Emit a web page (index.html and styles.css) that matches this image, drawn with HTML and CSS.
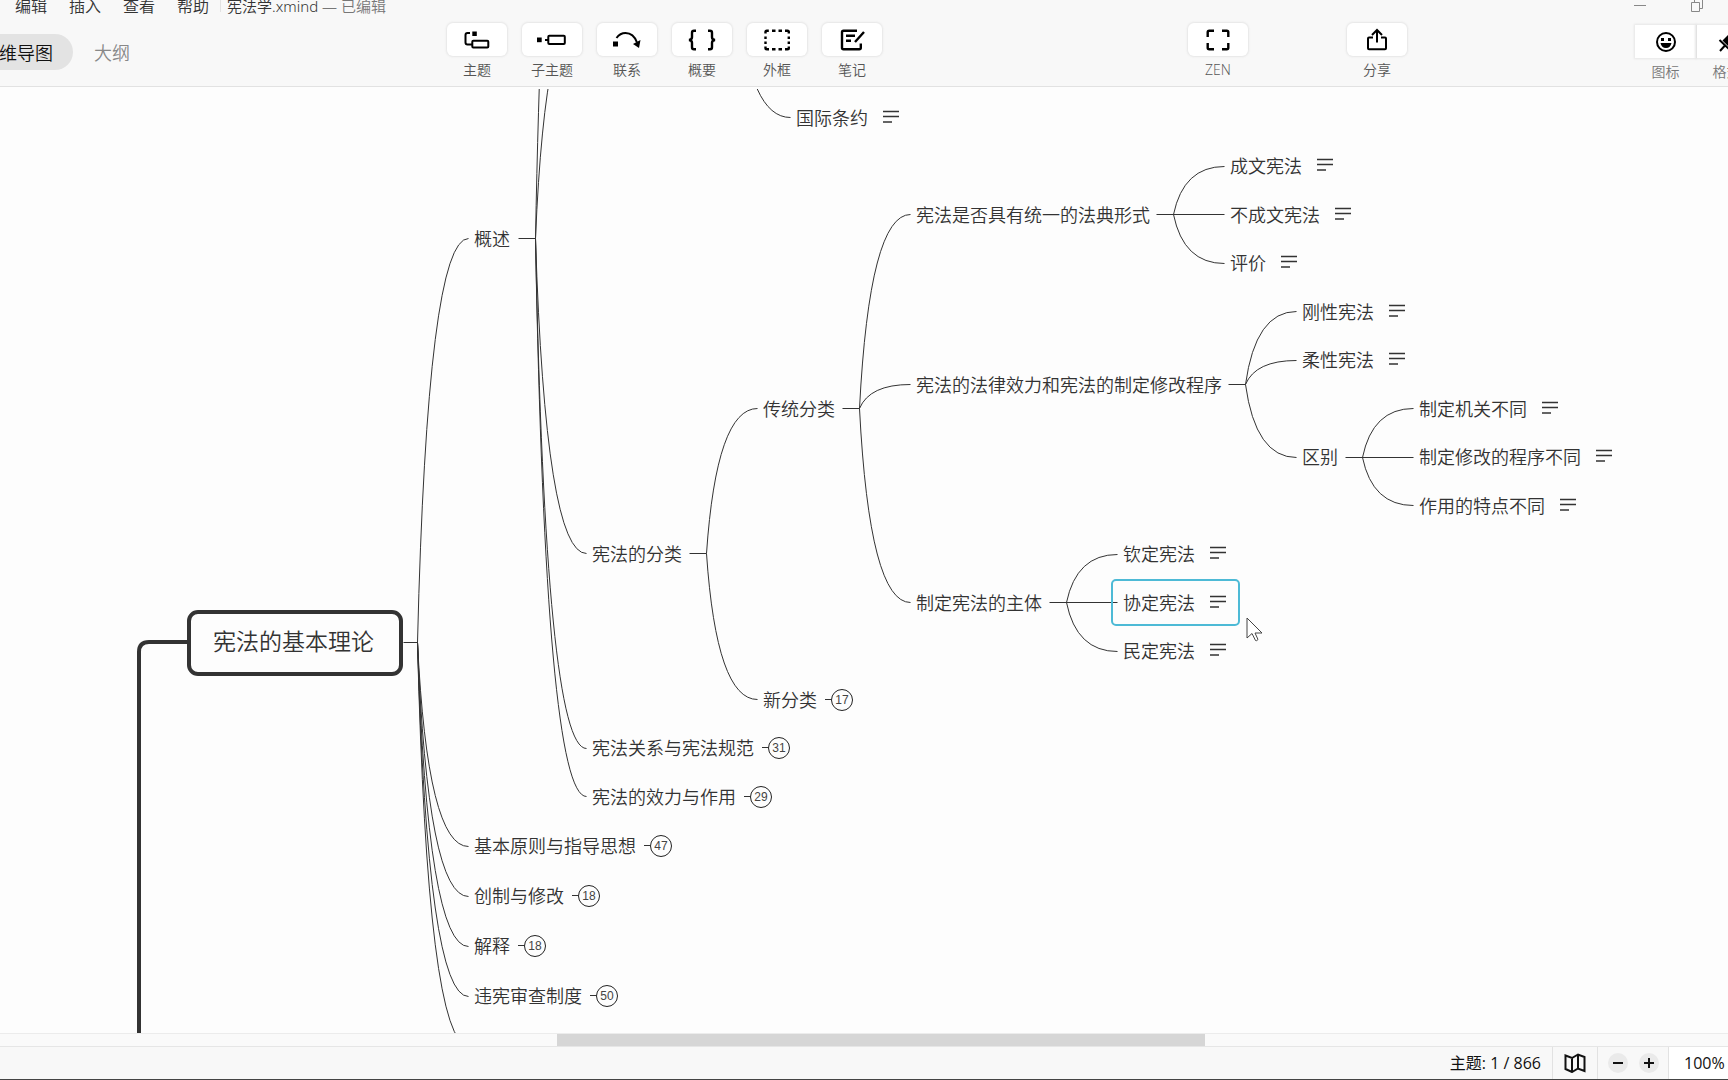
FILE: index.html
```html
<!DOCTYPE html>
<html lang="zh-CN">
<head>
<meta charset="utf-8">
<meta name="viewport" content="width=device-width, initial-scale=1">
<title>宪法学.xmind</title>
<link rel="stylesheet" href="styles.css">
</head>
<body>
<svg class="sprite" aria-hidden="true">
  <symbol id="note" viewBox="0 0 16 14"><path d="M0 1.500h16M0 6.500h16M0 12h9" stroke="currentColor" stroke-width="1.300"/></symbol>
</svg>
<div class="app">
  <header class="header">
    <div class="menubar">
      <nav class="menus">
        <button>文件</button><button>编辑</button><button>插入</button><button>查看</button><button>帮助</button>
      </nav>
      <p class="doc-title">宪法学.xmind <span class="doc-state">— 已编辑</span></p>
      <div class="window-controls">
        <button aria-label="最小化"><svg width="14" height="14" viewBox="0 0 14 14"><path d="M1 6.500h12"/></svg></button>
        <button aria-label="还原"><svg width="14" height="14" viewBox="0 0 14 14"><path d="M1.500 3.500h8v9h-8zM4.500 3.500v-3h8v9h-3"/></svg></button>
      </div>
    </div>
    <div class="toolbar">
      <div class="tabs">
        <button class="tab tab-active">思维导图</button>
        <button class="tab">大纲</button>
      </div>
      <div class="tools">
        <button class="tool"><span class="tool-face"><svg class="icon" viewBox="0 0 32 24"><rect x="11.300" y="12.700" width="16" height="6.800" rx="1"/><path d="M9 5H6.500Q4.500 5 4.500 7v7.500q0 2 2 2H11"/><path class="solid" d="M11.300 3.500h4.500V8h-4.500z"/></svg></span>主题</button>
        <button class="tool"><span class="tool-face"><svg class="icon" viewBox="0 0 32 24"><rect x="12.300" y="7.700" width="16.500" height="8.400" rx="1"/><path d="M9 12h3"/><path class="solid" d="M1 9.500h4.700v4.700H1z"/></svg></span>子主题</button>
        <button class="tool"><span class="tool-face"><svg class="icon" viewBox="0 0 32 24"><path d="M5.500 10C8 6.500 11 5 14.500 5c5.500 0 9.500 4 11.500 9.500"/><path class="solid" d="M2 13.500h5v5H2zM22 16l7.500-4L28 20z"/></svg></span>联系</button>
        <button class="tool"><span class="tool-face"><svg class="icon bold" viewBox="0 0 32 24"><path d="M10 2.700H8q-2 0-2 2v4.500Q6 11.600 3 12q3 .4 3 2.800v4.500q0 2 2 2h2M22 2.700h2q2 0 2 2v4.500q0 2.400 3 2.800-3 .4-3 2.800v4.500q0 2-2 2h-2"/></svg></span>概要</button>
        <button class="tool"><span class="tool-face"><svg class="icon bold" viewBox="0 0 32 24"><path d="M4.500 5.500V4q0-1.300 1.300-1.300h2M11 2.700h3.500M17.500 2.700H21M24 2.700h2.500q1.300 0 1.300 1.300v1.500M27.800 8.500v2.500M27.800 13.500V16M27.800 18.500V20q0 1.300-1.300 1.300H24M21 21.300h-3.500M14.500 21.300H11M8 21.300H5.800q-1.300 0-1.300-1.300v-1.500M4.500 16v-2.500M4.500 11V8.500"/></svg></span>外框</button>
        <button class="tool"><span class="tool-face"><svg class="icon bold" viewBox="0 0 32 24"><path d="M21 2.700H7.500Q6 2.700 6 4.200v15.600q0 1.500 1.500 1.500h15.800q1.500 0 1.500-1.500V15.500M10 7.700h9M10 12.700h5M28 4l-9 10"/></svg></span>笔记</button>
      </div>
      <div class="view-tools">
        <button class="tool"><span class="tool-face"><svg class="icon bold" viewBox="0 0 32 24"><path d="M5.700 9V4.200q0-1.500 1.500-1.500H12M20 2.700h4.800q1.500 0 1.500 1.500V9M26.300 15v4.800q0 1.500-1.500 1.500H20M12 21.300H7.200q-1.500 0-1.500-1.500V15"/></svg></span>ZEN</button>
        <button class="tool"><span class="tool-face"><svg class="icon" viewBox="0 0 32 24"><path d="M12 9.500H8q-1 0-1 1v9.800q0 1 1 1h16q1 0 1-1v-9.800q0-1-1-1h-4M16 14.500V2.500M11 7l5-5 5 5"/></svg></span>分享</button>
      </div>
      <div class="panel-tools">
        <button class="tool"><span class="tool-face"><svg class="icon" viewBox="0 0 32 24"><circle cx="16" cy="12" r="9"/><path class="solid" d="M11 8h3v3h-3zM18 8h3v3h-3zM10.500 13h11q-1 5-5.500 5t-5.500-5z"/></svg></span>图标</button>
        <button class="tool"><span class="tool-face"><svg class="icon" viewBox="0 0 32 24"><path class="solid" d="M11.500 10.500L20 2l8 8-8.500 8.500z"/><path d="M8.500 10l9.500 9M13.500 16l-4.500 5"/></svg></span>格式</button>
      </div>
    </div>
  </header>

  <main class="canvas">
    <svg class="wires" aria-hidden="true">
      <path class="trunk" d="M139 960V563q0-10 10-10h40"/>
      <g transform="translate(.5 .5)">
        <!-- central branch -->
        <path d="M403 553h14M417 553Q427 149 468 149M417 553Q427 757 468 757M417 553Q427 807 468 807M417 553Q427 857 468 857M417 553Q427 907 468 907M417 553Q427 956 468 956"/>
        <!-- 概述 -->
        <path d="M518 149h17M535 149Q545 -388 586 -388M535 149Q545 -90 586 -90M535 149Q545 464 586 464M535 149Q545 659 586 659M535 149Q545 707 586 707M739 -86Q749 28 790 28"/>
        <!-- 宪法的分类 -->
        <path d="M689 464h17M706 464Q716 319 757 319M706 464Q716 610 757 610"/>
        <!-- 传统分类 -->
        <path d="M842 319h17M859 319Q869 125 910 125M859 319Q869 295 910 295M859 319Q869 513 910 513"/>
        <path d="M1156 125h68M1173 125Q1183 77 1224 77M1173 125Q1183 174 1224 174"/>
        <path d="M1228 295h17M1245 295Q1255 222 1296 222M1245 295Q1255 271 1296 271M1245 295Q1255 368 1296 368"/>
        <path d="M1345 368h68M1362 368Q1372 319 1413 319M1362 368Q1372 416 1413 416"/>
        <path d="M1049 513h68M1066 513Q1076 465 1117 465M1066 513Q1076 562 1117 562"/>
      </g>
    </svg>

    <div class="topic main-topic">宪法的基本理论</div>
    <div class="topic t-overview">概述</div>
    <div class="topic t-principles">基本原则与指导思想<button class="count">47</button></div>
    <div class="topic t-creation">创制与修改<button class="count">18</button></div>
    <div class="topic t-interpret">解释<button class="count">18</button></div>
    <div class="topic t-review">违宪审查制度<button class="count">50</button></div>

    <div class="topic t-treaty">国际条约<svg class="note"><use href="#note"/></svg></div>
    <div class="topic t-classes">宪法的分类</div>
    <div class="topic t-norms">宪法关系与宪法规范<button class="count">31</button></div>
    <div class="topic t-effect">宪法的效力与作用<button class="count">29</button></div>

    <div class="topic t-traditional">传统分类</div>
    <div class="topic t-modern">新分类<button class="count">17</button></div>

    <div class="topic t-form">宪法是否具有统一的法典形式</div>
    <div class="topic t-procedure">宪法的法律效力和宪法的制定修改程序</div>
    <div class="topic t-subject">制定宪法的主体</div>

    <div class="topic t-written">成文宪法<svg class="note"><use href="#note"/></svg></div>
    <div class="topic t-unwritten">不成文宪法<svg class="note"><use href="#note"/></svg></div>
    <div class="topic t-comment">评价<svg class="note"><use href="#note"/></svg></div>

    <div class="topic t-rigid">刚性宪法<svg class="note"><use href="#note"/></svg></div>
    <div class="topic t-flexible">柔性宪法<svg class="note"><use href="#note"/></svg></div>
    <div class="topic t-difference">区别</div>
    <div class="topic t-organ">制定机关不同<svg class="note"><use href="#note"/></svg></div>
    <div class="topic t-process">制定修改的程序不同<svg class="note"><use href="#note"/></svg></div>
    <div class="topic t-feature">作用的特点不同<svg class="note"><use href="#note"/></svg></div>

    <div class="topic t-royal">钦定宪法<svg class="note"><use href="#note"/></svg></div>
    <div class="topic t-agreed selected">协定宪法<svg class="note"><use href="#note"/></svg></div>
    <div class="topic t-popular">民定宪法<svg class="note"><use href="#note"/></svg></div>

    <svg class="pointer" viewBox="0 0 18 26" aria-hidden="true"><path d="M1 1v20l5-4.500 3.500 7q1 .8 2.500-1l-3-6.500h7z"/></svg>
  </main>

  <div class="scrollbar"><div class="scroll-thumb"></div></div>

  <footer class="statusbar">
    <span class="topic-count">主题: 1 / 866</span>
    <button class="map-toggle" aria-label="导航图"><svg width="22" height="20" viewBox="0 0 22 20"><path d="M1.500 2.500L8 5l6-3.500 6.500 2.500v14L14 15.500 8 19l-6.500-3zM8 5v13M14 2v13"/></svg></button>
    <div class="zoom">
      <button class="zoom-step" aria-label="缩小"><svg width="20" height="20" viewBox="0 0 20 20"><path d="M5 10h10"/></svg></button>
      <button class="zoom-step" aria-label="放大"><svg width="20" height="20" viewBox="0 0 20 20"><path d="M5 10h10M10 5v10"/></svg></button>
    </div>
    <button class="zoom-value">100%</button>
  </footer>
</div>
</body>
</html>
```
FILE: styles.css
```css
* { box-sizing: border-box; }

body {
  margin: 0;
  background: #fdfdfd;
  color: #333;
  font-family: "Open Sans", "Noto Sans CJK SC", sans-serif;
  font-weight: 350;
}

button {
  margin: 0;
  padding: 0;
  border: 0;
  background: none;
  color: inherit;
  font: inherit;
  white-space: nowrap;
}

svg { display: block; flex: none; fill: none; }
.sprite { display: none; }

.app {
  display: flex;
  flex-direction: column;
  height: 100vh;
  overflow: hidden;
  border-bottom: 1px solid #444;
}

/* Header */
.header {
  flex: none;
  overflow: hidden;
  height: 87px;
  background: #f8f8f8;
  border-bottom: 1px solid #e2e2e2;
}

.menubar {
  display: flex;
  align-items: center;
  height: 11px;
  margin-left: -39px;
  font-size: 16px;
  line-height: 12px;
}
.menus { display: flex; gap: 22px; }
.doc-title {
  margin: 0 0 0 11px;
  padding-left: 6px;
  border-left: 1px solid #e2e2e2;
  font-size: 15px;
  font-family: "Noto Sans", "Noto Sans CJK SC", sans-serif;
}
.doc-state { color: #777; }
.window-controls { display: flex; gap: 43px; margin-left: auto; padding-right: 24px; }
.window-controls svg { overflow: visible; stroke: #888; }

.toolbar { display: flex; align-items: flex-start; padding-top: 12px; }

.tabs { display: flex; flex: none; gap: 1px; width: 486px; margin-left: -39px; padding-top: 11px; }
.tab {
  height: 36px;
  padding: 0 20px;
  border-radius: 18px;
  color: #888;
  font-size: 18px;
}
.tab-active { background: #e3e3e3; color: #111; }

.tools { display: flex; gap: 15px; }
.view-tools { display: flex; gap: 99px; margin-left: auto; }
.panel-tools { display: flex; margin-left: 228px; margin-right: -29px; padding-top: 2px; }

.tool {
  display: flex;
  flex-direction: column;
  align-items: center;
  gap: 4px;
  width: 60px;
  color: #555;
  font-size: 14px;
  line-height: 20px;
}
.tool-face {
  display: flex;
  align-items: center;
  justify-content: center;
  width: 60px;
  height: 33px;
  border-radius: 6px;
  background: #fff;
  box-shadow: 0 0 2px 1px #e6e6e6;
}
.panel-tools .tool { width: 61px; color: #777; }
.panel-tools .tool-face { width: 61px; border-radius: 0; }
.panel-tools .tool + .tool .tool-face { border-left: 1px solid #e2e2e2; }
.icon { width: 32px; height: 24px; stroke: #000; stroke-width: 2; }
.bold { stroke-width: 2.4; }
.solid { fill: #000; stroke: none; }

/* Mind map */
.canvas {
  position: relative;
  flex: 1;
  min-height: 0;
  overflow: hidden;
  border-top: 2px solid #fdfdfd;
}
.wires { position: absolute; inset: 0; width: 100%; height: 100%; stroke: #333; stroke-width: 1; }
.trunk { stroke-width: 4; }

.topic {
  position: absolute;
  display: flex;
  align-items: center;
  height: 24px;
  font-size: 18px;
  line-height: 24px;
  white-space: nowrap;
}
.main-topic {
  left: 187px;
  top: 521px;
  width: 216px;
  height: 66px;
  padding: 0 0 4px 22px;
  border: 4px solid #333;
  border-radius: 11px;
  font-size: 23px;
}
.note { width: 16px; height: 14px; margin: 0 0 2px 15px; color: #333; }

.count {
  position: relative;
  width: 22px;
  height: 22px;
  margin-left: 14px;
  border: 1px solid #222;
  border-radius: 50%;
  color: #444;
  font: 12px/20px "Liberation Sans", sans-serif;
}
.count::before {
  content: "";
  position: absolute;
  top: 9px;
  right: 20px;
  width: 7px;
  border-top: 1px solid #333;
}

.selected::before {
  content: "";
  position: absolute;
  inset: -12px -14px -11px -12px;
  border: 2px solid #4dbad6;
  border-radius: 5px;
}

.t-overview, .t-principles, .t-creation, .t-interpret, .t-review { left: 474px; }
.t-classes, .t-norms, .t-effect { left: 592px; }
.t-traditional, .t-modern { left: 763px; }
.t-treaty { left: 796px; }
.t-form, .t-procedure, .t-subject { left: 916px; }
.t-royal, .t-agreed, .t-popular { left: 1123px; }
.t-written, .t-unwritten, .t-comment { left: 1230px; }
.t-rigid, .t-flexible, .t-difference { left: 1302px; }
.t-organ, .t-process, .t-feature { left: 1419px; }

.t-treaty { top: 17px; }
.t-written { top: 65px; }
.t-form, .t-unwritten { top: 114px; }
.t-overview { top: 138px; }
.t-comment { top: 162px; }
.t-rigid { top: 211px; }
.t-flexible { top: 259px; }
.t-procedure { top: 284px; }
.t-traditional, .t-organ { top: 308px; }
.t-difference, .t-process { top: 356px; }
.t-feature { top: 405px; }
.t-classes, .t-royal { top: 453px; }
.t-subject, .t-agreed { top: 502px; }
.t-popular { top: 550px; }
.t-modern { top: 599px; }
.t-norms { top: 647px; }
.t-effect { top: 696px; }
.t-principles { top: 745px; }
.t-creation { top: 795px; }
.t-interpret { top: 845px; }
.t-review { top: 895px; }

.pointer {
  position: absolute;
  left: 1246px;
  top: 528px;
  width: 18px;
  height: 26px;
  fill: #fff;
  stroke: #444;
}

/* Scrollbar and status bar */
.scrollbar {
  flex: none;
  height: 13px;
  background: #fafafa;
  border-top: 1px solid #ececec;
}
.scroll-thumb { width: 37.5%; height: 12px; margin-left: 32.250%; background: #d6d6d6; }

.statusbar {
  display: flex;
  flex: none;
  align-items: stretch;
  justify-content: flex-end;
  height: 33px;
  border-top: 1px solid #e6e6e6;
  background: #f8f8f8;
  color: #111;
  font-weight: 400;
  font-size: 16px;
  line-height: 32px;
}
.topic-count { padding-right: 11px; }
.map-toggle { width: 45px; padding: 0 11px; border-left: 1px solid #e2e2e2; }
.map-toggle svg { stroke: #111; stroke-width: 2; }
.zoom { display: flex; align-items: center; gap: 11px; width: 71px; padding-left: 10px; border-left: 1px solid #e2e2e2; }
.zoom-step { border-radius: 50%; background: #eaeaea; }
.zoom-step svg { stroke: #111; stroke-width: 2; }
.zoom-value { width: 60px; padding-left: 15px; border-left: 1px solid #e2e2e2; background: #fff; text-align: left; }
```
